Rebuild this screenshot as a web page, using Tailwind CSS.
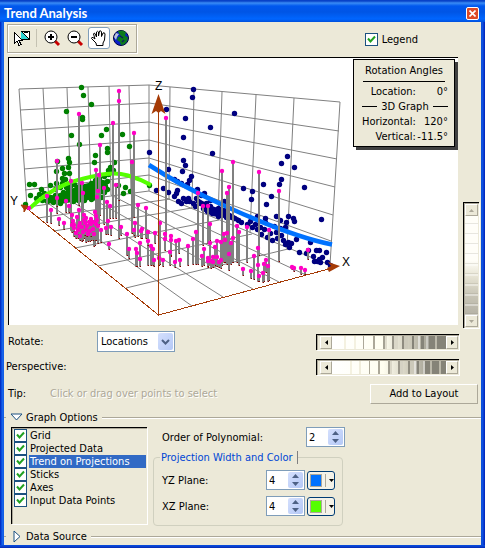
<!DOCTYPE html>
<html lang="en">
<head>
  <meta charset="UTF-8" />
  <meta name="viewport" content="width=device-width, initial-scale=1" />
  <title>Trend Analysis</title>
  <script src="https://cdn.jsdelivr.net/npm/@tailwindcss/browser@4"></script>
</head>
<body class="bg-[#ece9d8] text-black text-[11px] leading-[13px] font-['DejaVu_Sans_Condensed','DejaVu_Sans',sans-serif]">
  <div class="min-h-screen flex flex-col">
    <header class="h-[22px] pl-1 pr-1.5 flex items-center justify-between bg-[linear-gradient(to_bottom,#0842c8_0,#0842c8_1px,#3a8cf5_3px,#0058ee_6px,#0055e5_12px,#0066ff_19px,#004fdc_22px)]">
      <h1 class="mt-[3px] text-white text-[13px] leading-4 font-bold font-['Lato',sans-serif]">Trend Analysis</h1>
      <button type="button" aria-label="Close" class="mt-1 w-[13px] h-[13px] rounded-[2px] border border-white bg-[#dd4a26] grid place-items-center">
        <svg class="w-[7px] h-[7px]" viewBox="0 0 7 7" stroke="#fff" stroke-width="1.6"><path d="M.5.5l6 6M6.5.5l-6 6" /></svg>
      </button>
    </header>

    <div class="flex-1 flex">
      <div class="w-1 shrink-0 bg-[linear-gradient(to_right,#0020b8,#0a50e0_40%,#1e6cf0_75%,#0850d8)]"></div>

      <main class="flex-1 min-w-0 flex flex-col">
        <!-- toolbar -->
        <div class="h-[35px] pt-[2px] pl-[3px] flex items-start justify-between">
          <div class="w-[130px] h-[29px] border border-[#aca899] shadow-[inset_1px_1px_0_#fff,1px_1px_0_#fff] flex items-center pl-[3px] pb-[2px] bg-[#ece9d8]">
            <button type="button" aria-label="Select" class="w-[22px] h-[22px] grid place-items-center">
              <svg class="w-[18px] h-[18px]" viewBox="0 0 18 18" shape-rendering="crispEdges">
                <path d="M8 2h8v8H8z" fill="#fff" stroke="#000" />
                <path d="M8 3l7 7H8z" fill="#2fd5d5" />
                <path d="M8 2l8 8M11 4l4-1" stroke="#000" fill="none" />
                <path d="M1.500 3.500v11l2.500-2.500 2 4.500 2-1-2-4h3.500z" fill="#fff" stroke="#000" />
              </svg>
            </button>
            <span class="ml-[3px] mr-1 w-px h-[18px] bg-[#c5c2b2]"></span>
            <button type="button" aria-label="Zoom in" class="w-[22px] h-[22px] grid place-items-center">
              <svg class="w-[18px] h-[18px]" viewBox="0 0 18 18">
                <path d="M12 12l4 4" stroke="#c80000" stroke-width="3" />
                <circle cx="8" cy="8" r="6" fill="#fff" stroke="#000" />
                <path d="M5 8h6M8 5v6" stroke="#000" stroke-width="2" />
              </svg>
            </button>
            <button type="button" aria-label="Zoom out" class="ml-px w-[22px] h-[22px] grid place-items-center">
              <svg class="w-[18px] h-[18px]" viewBox="0 0 18 18">
                <path d="M12 12l4 4" stroke="#c80000" stroke-width="3" />
                <circle cx="8" cy="8" r="6" fill="#fff" stroke="#000" />
                <path d="M5 8h6" stroke="#000" stroke-width="2" />
              </svg>
            </button>
            <button type="button" aria-label="Pan" aria-pressed="true" class="ml-[2px] w-[22px] h-[22px] rounded-[3px] border border-[#7f9db9] bg-white grid place-items-center">
              <svg class="w-[18px] h-[18px]" viewBox="0 0 18 18">
                <path d="M6.500 16.500L6 14 1.500 9.500Q1.500 8 3 8.500L5 10 3.500 5Q4 3.500 5 4.500L6.500 8V3Q7.500 1.500 8.500 3V7L9.500 2Q11 1.200 11.500 3V7.500L13 4Q14.500 3 15 5L14.500 11 13 14V16.500z" fill="#fff" stroke="#000" />
              </svg>
            </button>
            <button type="button" aria-label="Full extent" class="w-[22px] h-[22px] grid place-items-center">
              <svg class="w-[18px] h-[18px]" viewBox="0 0 18 18">
                <circle cx="9" cy="9" r="7.500" fill="#0a1ec8" stroke="#000040" />
                <path d="M6 2l5-.5 3 2-1 3 3 2-1 4-3 3-3 .5-1-3-3-2 1-3 3-1-2-2z" fill="#0c7a1c" />
                <path d="M2 8l2-4 3 1-2 3-1 3z" fill="#b9c4d6" />
                <path d="M8 7l3 2M10 13l2-2" stroke="#0a1e60" stroke-width="1.500" />
              </svg>
            </button>
          </div>
          <label class="mt-[9px] mr-[63px] flex items-center gap-1">
            <span class="relative w-[13px] h-[13px]">
              <input type="checkbox" checked class="peer block appearance-none w-[13px] h-[13px] bg-white border border-[#1c5180]" />
              <svg class="hidden peer-checked:block pointer-events-none absolute inset-0" viewBox="0 0 13 13" fill="none" stroke="#21a121" stroke-width="2"><path d="M3 5.500l2.500 3L10 3.500" /></svg>
            </span>
            Legend
          </label>
        </div>

        <!-- graph and vertical wheel -->
        <div class="flex items-start pl-1">
          <div class="relative flex-1 min-w-0 bg-white border-t border-l border-black">
            <svg id="graph" class="block w-full" viewBox="9 58 449 267" role="img" aria-label="3D trend graph">
              <g id="grid" stroke="#808080" fill="none"></g>
              <g id="frontAxes" stroke="#a53b06" fill="none" shape-rendering="crispEdges">
                <path d="M25 207L158.500 315L336 267" />
              </g>
              <path d="M40 202L50 196 66 191 80 185 97 181 108 182 107 190 98 197 80 201 60 204z" fill="#008000" />
              <path d="M201 200L212 206 227 211 241 219 238 222 224 218 212 216 201 210z" fill="#000080" />
              <g id="projected"></g>
              <g id="trend" fill="none" stroke-width="4">
                <path d="M149 165C180 185 205 197 225 206S290 236 332 244.500" stroke="#0072ff" stroke-width="4.500" />
                <path d="M30 208C45 194 62 184 80 179.500S112 171 128 175.500Q140 179 151 185" stroke="#55ff00" />
              </g>
              <g id="sticks"></g>
              <path d="M158.500 315V100" stroke="#a53b06" shape-rendering="crispEdges" />
              <path d="M158.500 94L165.500 114 161 111 158.500 113 156 111 151.500 114z" fill="#a53b06" />
              <path d="M340 266L328 262 331 266 327 268 329 272z" fill="#a53b06" />
              <path d="M21 205L28 206 26 209 24 212 24 209z" fill="#a53b06" stroke="#a53b06" />
              <g font-size="12" font-family="Liberation Sans, Arial, sans-serif">
                <text x="155" y="90">Z</text>
                <text x="342" y="266">X</text>
                <text x="10" y="205">Y</text>
              </g>
            </svg>
            <div class="absolute top-px right-[3px] w-[102px] h-[88px] pt-1 px-[9px] bg-[#ece9d8] border border-black shadow-[3px_3px_0_#404040]">
              <div class="text-center leading-[14px] pb-[3px] border-b border-black whitespace-nowrap">Rotation Angles</div>
              <dl class="mt-[2px] grid grid-cols-[1fr_32px] leading-[15px] -mx-px text-right whitespace-nowrap">
                <dt>Location:</dt><dd>0°</dd>
                <dt class="col-span-2 flex items-center gap-1 before:h-px before:flex-1 before:bg-black after:h-px after:flex-1 after:bg-black">3D Graph</dt>
                <dt>Horizontal:</dt><dd>120°</dd>
                <dt>Vertical:</dt><dd>-11.5°</dd>
              </dl>
            </div>
          </div>
          <div class="mt-[145px] ml-[5px] mr-[2px] w-4 h-[126px] shrink-0 flex flex-col border-t border-l border-black shadow-[inset_1px_1px_0_#aca899,1px_1px_0_#fff] p-px">
            <button type="button" aria-label="Up" class="h-3 border border-white border-r-[#aca899] border-b-[#aca899] bg-[#ece9d8] grid place-items-center"><svg class="w-[5px] h-[3px]" viewBox="0 0 5 3" fill="#aca899"><path d="M0 3L2.500 0 5 3z" /></svg></button>
            <input type="range" aria-label="Vertical rotation" class="flex-1 min-h-0 w-full appearance-none [writing-mode:vertical-lr] [&::-webkit-slider-thumb]:opacity-0 bg-[repeating-linear-gradient(to_bottom,transparent_0_7px,#8a887a33_7px_8px,#ffffff66_8px_10px),linear-gradient(to_bottom,#fffef8_0_45%,#e8e5d5_60%,#c8c5b6_80%,#b5b2a6)]" />
            <button type="button" aria-label="Down" class="h-3 border border-white border-r-[#aca899] border-b-[#aca899] bg-[#ece9d8] grid place-items-center"><svg class="w-[5px] h-[3px]" viewBox="0 0 5 3" fill="#aca899"><path d="M0 0h5L2.500 3z" /></svg></button>
          </div>
        </div>

        <!-- rotation controls -->
        <div class="h-[27px] pl-1 flex items-center">
          <label for="rotate" class="w-[89px]">Rotate:</label>
          <span class="relative">
            <select id="rotate" class="block appearance-none w-[78px] h-[21px] pl-[3px] bg-white border border-[#7f9db9] text-[11px]">
              <option>Locations</option>
              <option>3D Graph</option>
            </select>
            <span class="pointer-events-none absolute right-[2px] top-[2px] w-[15px] h-[17px] rounded-[2px] bg-linear-to-br from-[#d5e0fd] to-[#b4c8f6] grid place-items-center">
              <svg class="w-[9px] h-[6px]" viewBox="0 0 9 6" fill="none" stroke="#4d6185" stroke-width="2"><path d="M1 1l3.500 3.500L8 1" /></svg>
            </span>
          </span>
          <div class="ml-auto mr-[22px] w-[143px] h-4 flex border-t border-l border-black shadow-[inset_1px_1px_0_#aca899,1px_1px_0_#fff] p-px pl-[3px]">
            <button type="button" aria-label="Rotate left" class="w-3 border border-white border-r-[#aca899] border-b-[#aca899] grid place-items-center"><svg class="w-[3px] h-[5px]" viewBox="0 0 3 5"><path d="M3 0v5L0 2.500z" /></svg></button>
            <input type="range" aria-label="Rotate" class="flex-1 min-w-0 h-full appearance-none [&::-webkit-slider-thumb]:opacity-0 bg-[linear-gradient(to_right,transparent_12px,#f4f1e0_12px_14px,transparent_14px_22px,#f4f1e0_22px_24px,transparent_24px_31px,#aca899_31px_32px,transparent_32px_41px,#aca899_41px_43px,transparent_43px_51px,#a5a294_51px_53px,#e0ddce_53px_55px,transparent_55px_60px,#99968a_60px_62px,#dad7c8_62px_66px,transparent_66px_70px,#8f8c80_70px_72px,#ccc9ba_72px_76px,transparent_76px_80px,#858378_80px_82px,transparent_82px_86px,#fff8_86px_88px,transparent_88px_89px,#858378_89px_92px,transparent_92px_94px,#fff6_94px_96px,#858378_97px_103px,#bbb8aa_103px_105px,#858378_105px),linear-gradient(to_right,#fff,#fffef0_45%,#d5d2c2_65%,#98968a_90%)]" />
            <button type="button" aria-label="Rotate right" class="w-3 border border-white border-r-[#aca899] border-b-[#aca899] grid place-items-center"><svg class="w-[3px] h-[5px]" viewBox="0 0 3 5"><path d="M0 0v5l3-2.500z" /></svg></button>
          </div>
        </div>
        <div class="h-6 pl-[2px] pb-px flex items-center">
          <label for="perspective">Perspective:</label>
          <div class="ml-auto mr-[22px] w-[143px] h-4 flex border-t border-l border-black shadow-[inset_1px_1px_0_#aca899,1px_1px_0_#fff] p-px pl-[3px]">
            <button type="button" aria-label="Less" class="w-3 border border-white border-r-[#aca899] border-b-[#aca899] grid place-items-center"><svg class="w-[3px] h-[5px]" viewBox="0 0 3 5"><path d="M3 0v5L0 2.500z" /></svg></button>
            <input id="perspective" type="range" class="flex-1 min-w-0 h-full appearance-none [&::-webkit-slider-thumb]:opacity-0 bg-[linear-gradient(to_right,transparent_18px,#f4f1e0_18px_20px,transparent_20px_27px,#f0eddc_27px_29px,transparent_29px_37px,#aca899_37px_38px,transparent_38px_46px,#aca899_46px_48px,transparent_48px_56px,#a09d90_56px_58px,#dad7c8_58px_60px,transparent_60px_66px,#99968a_66px_68px,#d5d2c4_68px_71px,transparent_71px_76px,#8f8c80_76px_78px,#ccc9ba_78px_82px,#fff8_82px_84px,#858378_85px_87px,transparent_87px_91px,#fff6_91px_93px,#858378_93px_98px,#bbb8aa_98px_100px,#858378_100px_107px,#bbb8aa_107px_109px,#858378_109px),linear-gradient(to_right,#fff,#fffef0_45%,#d5d2c2_65%,#98968a_90%)]" />
            <button type="button" aria-label="More" class="w-3 border border-white border-r-[#aca899] border-b-[#aca899] grid place-items-center"><svg class="w-[3px] h-[5px]" viewBox="0 0 3 5"><path d="M0 0v5l3-2.500z" /></svg></button>
          </div>
        </div>
        <div class="h-[29px] pl-1 flex items-center">
          <span class="w-[42px]">Tip:</span>
          <span class="text-[#aca899] [text-shadow:1px_1px_0_#fff]">Click or drag over points to select</span>
          <button type="button" class="ml-auto mr-[3px] w-[108px] h-5 border border-white border-r-[#aca899] border-b-[#aca899]">Add to Layout</button>
        </div>

        <!-- graph options -->
        <h2 class="h-[18px] flex items-center gap-1 before:w-[2px] before:h-px before:bg-[#aca899] after:h-px after:flex-1 after:bg-[#aca899] after:shadow-[0_1px_0_#fff]">
          <button type="button" aria-expanded="true" class="flex items-center gap-[3px]">
            <svg class="w-[13px] h-2" viewBox="0 0 13 8" fill="#fff" stroke="#1c5180"><path d="M1 1h11L6.500 7z" /></svg>
            Graph Options
          </button>
        </h2>
        <div class="flex items-start pl-[7px] pt-px">
          <ul id="layers" class="w-[136px] h-[97px] pt-px pl-[2px] pr-px border-t border-l border-black shadow-[inset_1px_1px_0_#aca899,1px_1px_0_#fff]"></ul>
          <div class="ml-[6px] w-[190px]">
            <div class="h-5 pl-[9px] flex items-center">
              <label for="order">Order of Polynomial:</label>
              <span class="ml-auto mr-[-2px] w-[39px] h-5 flex border border-[#7f9db9] bg-white">
                <input id="order" value="2" class="w-5 min-w-0 pl-[2px] outline-none" />
                <span class="m-px flex-1 flex flex-col rounded-[2px] bg-linear-to-br from-[#d5e0fd] to-[#b4c8f6]">
                  <button type="button" aria-label="Increase" class="flex-1 grid place-items-center"><svg class="w-[7px] h-1" viewBox="0 0 7 4" fill="#4d6185"><path d="M0 4L3.500 0 7 4z" /></svg></button>
                  <button type="button" aria-label="Decrease" class="flex-1 grid place-items-center"><svg class="w-[7px] h-1" viewBox="0 0 7 4" fill="#4d6185"><path d="M0 0h7L3.500 4z" /></svg></button>
                </span>
              </span>
            </div>
            <fieldset class="mt-1 h-[75px] px-[6px] border border-[#d0d0bf] rounded-[4px]">
              <legend class="pl-px pr-1 text-[#0046d5] border-r border-[#808080]">Projection Width and Color</legend>
              <div class="mt-[6px] flex flex-col gap-[6px]">
                <div class="h-5 pl-[2px] flex items-center">
                  <label for="yz">YZ Plane:</label>
                  <span class="ml-auto w-[39px] h-5 flex border border-[#7f9db9] bg-white">
                    <input id="yz" value="4" class="w-5 min-w-0 pl-[2px] outline-none" />
                    <span class="m-px flex-1 flex flex-col rounded-[2px] bg-linear-to-br from-[#d5e0fd] to-[#b4c8f6]">
                      <button type="button" aria-label="Increase" class="flex-1 grid place-items-center"><svg class="w-[7px] h-1" viewBox="0 0 7 4" fill="#4d6185"><path d="M0 4L3.500 0 7 4z" /></svg></button>
                      <button type="button" aria-label="Decrease" class="flex-1 grid place-items-center"><svg class="w-[7px] h-1" viewBox="0 0 7 4" fill="#4d6185"><path d="M0 0h7L3.500 4z" /></svg></button>
                    </span>
                  </span>
                  <button type="button" aria-label="YZ color" class="ml-[2px] mr-px w-7 h-[19px] pl-[2px] flex items-center gap-[3px] rounded-[3px] border border-[#003c74] bg-[#f4f2e8]">
                    <span class="w-3 h-[13px] border border-[#aca899] bg-[#0072ff]"></span>
                    <span class="w-px h-[13px] bg-[#aca899]"></span>
                    <svg class="w-[5px] h-[3px]" viewBox="0 0 5 3"><path d="M0 0h5L2.500 3z" /></svg>
                  </button>
                </div>
                <div class="h-5 pl-[2px] flex items-center">
                  <label for="xz">XZ Plane:</label>
                  <span class="ml-auto w-[39px] h-5 flex border border-[#7f9db9] bg-white">
                    <input id="xz" value="4" class="w-5 min-w-0 pl-[2px] outline-none" />
                    <span class="m-px flex-1 flex flex-col rounded-[2px] bg-linear-to-br from-[#d5e0fd] to-[#b4c8f6]">
                      <button type="button" aria-label="Increase" class="flex-1 grid place-items-center"><svg class="w-[7px] h-1" viewBox="0 0 7 4" fill="#4d6185"><path d="M0 4L3.500 0 7 4z" /></svg></button>
                      <button type="button" aria-label="Decrease" class="flex-1 grid place-items-center"><svg class="w-[7px] h-1" viewBox="0 0 7 4" fill="#4d6185"><path d="M0 0h7L3.500 4z" /></svg></button>
                    </span>
                  </span>
                  <button type="button" aria-label="XZ color" class="ml-[2px] mr-px w-7 h-[19px] pl-[2px] flex items-center gap-[3px] rounded-[3px] border border-[#003c74] bg-[#f4f2e8]">
                    <span class="w-3 h-[13px] border border-[#aca899] bg-[#55ff00]"></span>
                    <span class="w-px h-[13px] bg-[#aca899]"></span>
                    <svg class="w-[5px] h-[3px]" viewBox="0 0 5 3"><path d="M0 0h5L2.500 3z" /></svg>
                  </button>
                </div>
              </div>
            </fieldset>
          </div>
        </div>

        <h2 class="h-[19px] pt-[2px] flex items-center gap-1 before:w-[2px] before:h-px before:bg-[#aca899] after:h-px after:flex-1 after:bg-[#aca899] after:shadow-[0_1px_0_#fff]">
          <button type="button" aria-expanded="false" class="flex items-center">
            <svg class="ml-[3px] mr-[5px] w-2 h-[13px]" viewBox="0 0 8 13" fill="#fff" stroke="#1c5180"><path d="M1 1v11l6-5.500z" /></svg>
            Data Source
          </button>
        </h2>
      </main>

      <div class="w-1 shrink-0 bg-[linear-gradient(to_right,#0850d8,#1050e0_40%,#0020b8)]"></div>
    </div>
    <div class="h-1 bg-[linear-gradient(to_bottom,#0850e0,#0838c8_50%,#001890)]"></div>
  </div>

  <script>
    // checklist of graph layers
    const layers = ["Grid", "Projected Data", "Trend on Projections", "Sticks", "Axes", "Input Data Points"];
    const selected = 2;

    document.getElementById('layers').innerHTML = layers.map((name, i) => `
      <li><label class="flex items-center gap-[2px] h-[13px]">
        <span class="relative w-[13px] h-[13px] shrink-0">
          <input type="checkbox" checked class="peer block appearance-none w-[13px] h-[13px] bg-white border border-[#1c5180]" />
          <svg class="hidden peer-checked:block pointer-events-none absolute inset-0" viewBox="0 0 13 13" fill="none" stroke="#21a121" stroke-width="2"><path d="M3 5.500l2.500 3L10 3.500" /></svg>
        </span>
        <span class="${i === selected ? 'flex-1 pl-px whitespace-nowrap bg-[#316ac5] text-white' : 'flex-1 pl-px whitespace-nowrap'}">${name}</span>
      </label></li>`).join('');

    // wall and floor lines: x1, y1, x2, y2
    const grid = [
      [19,89,149,85],[20,110,149,103],[22,130,149,122],[23,150,149,140],[24,169,149,158],[25,190,149,175],[27,207,149,191],
      [149,85,340,102],[149,103,339,131],[149,122,337,159],[149,140,335,187],[149,158,333,215],[149,175,331,241],[149,191,330,265],
      [19,89,27,207],[43,88,49,204],[67,88,71,201],[88,87,91,198],[109,86,111,195],[129,86,131,193],[149,85,149,191],
      [170,87,169,199],[194,89,192,208],[222,92,218,220],[256,95,250,233],[294,98,287,249],[340,102,330,265],
      [38,218,170,199],[54,231,192,208],[75,248,219,220],[98,266,252,234],[126,288,288,249],
      [192,306,49,204],[223,297,71,201],[253,289,91,198],[279,282,111,195],[306,275,131,193]
    ];

    const green = [
      [81,87],[83,95],[91,104],[66,111],[82,117],[82,119],[71,135],[79,144],[101,135],[106,129],[122,134],[107,148],[107,152],[95,155],[94,162],[129,146],[114,162],
      [68,158],[69,162],[57,161],[56,171],[62,168],[68,167],[64,173],[69,173],[62,178],[65,179],[62,183],[29,184],[34,184],[41,189],[30,195],[25,204],[50,185],[56,183],[55,189],[60,187],[66,187],
      [36,198],[39,194],[44,193],[42,200],[47,201],[50,197],[53,202],[55,195],[57,200],[60,203],[61,196],[63,192],[65,199],[66,195],[68,190],[70,198],[71,194],[73,201],[74,191],[76,196],[77,187],[78,200],[79,192],[81,196],[82,188],[84,200],[85,193],[87,197],[87,186],[89,191],[91,199],[91,183],[93,194],[94,188],[96,198],[97,184],[98,192],[100,188],[101,197],[102,182],[104,192],[105,186],[107,189],[107,181],[74,184],[80,184],[70,186],
      [110,167],[108,170],[113,170],[104,176],[108,174],[118,185],[125,187],[123,193],[130,191],[149,185],[95,180],[99,178]
    ];

    const navy = [
      [193,89],[192,97],[166,109],[185,118],[183,137],[210,127],[234,113],[212,153],[149,152],[183,160],[185,165],[182,171],[287,156],[281,163],[294,167],[281,179],[263,184],[279,184],
      [168,169],[191,176],[189,180],[187,184],[174,179],[177,181],[181,183],[156,190],[163,188],[168,192],[177,190],[174,196],[178,201],[183,198],[176,193],[181,203],[188,198],[189,201],[197,189],[196,198],[193,203],[186,201],[201,195],[204,193],[210,200],
      [243,188],[252,191],[251,199],[271,196],[266,204],[304,187],[321,219],[224,201],[276,216],[288,216],[293,218],[294,221],[257,216],[265,218],
      [200,203],[203,208],[206,203],[207,211],[210,206],[212,213],[215,210],[218,216],[218,208],[222,213],[226,217],[229,216],[234,218],[238,220],[241,222],[224,210],[198,201],[195,206],
      [247,224],[250,221],[252,227],[255,224],[257,229],[260,227],[261,234],[264,229],[265,222],[267,237],[270,233],[272,240],[274,226],[277,238],[280,228],[281,235],[283,240],[285,227],[285,244],[288,242],[289,247],[291,243],[296,239],[280,220],[286,222],[276,232],
      [310,242],[326,252],[316,250],[319,250],[308,250],[299,252],[306,253],[313,256],[322,257],[314,261],[317,261],[320,262],[319,259],[327,262],[330,265]
    ];

    // x, top y, bottom y
    const sticks = [
      [119,91,238],[119,101,200],[79,114,205],[113,123,218],[100,145,215],[57,161,213],[134,133,217],[132,162,233],[71,181,230],[82,183,228],[96,170,232],[99,175,224],[47,196,222],[29,208,209],[51,210,223],[59,219,225],[69,206,212],[66,201,212],[57,198,206],[83,193,220],[97,197,222],[98,191,235],[104,188,224],[107,202,232],[110,206,218],[72,215,222],[116,185,218],
      [64,223,229],[72,225,232],[74,228,236],[77,217,232],[79,210,224],[80,223,238],[82,227,241],[84,220,230],[86,218,236],[86,230,242],[89,222,238],[91,224,240],[93,222,237],[95,212,245],[96,216,240],[97,220,236],[94,234,246],[98,226,243],[101,230,242],[106,228,234],[108,221,234],[111,227,235],[109,244,249],[76,233,238],[80,236,240],[84,215,238],[88,234,241],[73,221,228],
      [74,225,231],[78,230,238],[83,232,240],[87,226,236],[90,231,241],[93,229,240],[96,224,240],[79,226,234],[85,223,235],[91,219,236],
      [138,205,236],[146,208,238],[135,223,237],[134,230,235],[141,231,238],[142,229,238],[121,227,235],[127,234,255],[129,249,258],[136,249,266],[137,253,266],[140,243,265],[148,241,265],[151,246,265],[140,259,266],[154,260,266],[153,249,265],[155,233,243],[148,232,245],[160,223,264],[159,258,265],[163,260,266],[165,234,248],[171,236,256],[176,241,262],[179,240,253],[171,240,255],[170,252,265],[175,262,267],[180,260,266],[165,239,250],
      [166,118,238],[188,246,265],[193,239,264],[196,232,264],[198,193,264],[204,249,265],[202,256,266],[208,261,267],[203,206,245],[208,206,243],[210,224,240],[222,171,265],[233,162,262],[259,172,255],[229,187,262],[227,193,262],[279,191,261],[269,230,280],[258,248,280],[247,227,262],[237,226,262],[239,232,265],[217,241,264],[221,242,266],[224,234,262],[227,233,264],[225,240,262],[231,243,264],[233,238,262],[210,243,265],[215,247,265],[213,257,266],[208,258,266],[211,261,268],[213,262,267],[217,257,266],[219,262,267],[221,260,268],[229,254,270],
      [308,250,259],[292,267,269],[294,268,271],[301,268,274],[305,270,274],[243,269,275],[251,271,278],[254,256,279],[264,264,281],[266,260,272],[268,266,281],[259,276,281],[258,265,281],[263,273,282]
    ];

    const dots = (pts, color) => pts.map(([x, y]) => `<circle cx="${x}.5" cy="${y}.5" r="2.7" fill="${color}" />`).join('');

    document.getElementById('grid').innerHTML = grid.map(([a, b, c, d]) => `<path d="M${a} ${b}L${c} ${d}" />`).join('');
    document.getElementById('projected').innerHTML = dots(green, '#008000') + dots(navy, '#000080');
    document.getElementById('sticks').innerHTML =
      sticks.map(([x, t, b]) => `<path d="M${x} ${t}V${b}" stroke="#808080" stroke-width="2" /><path d="M${x - 1} ${b}h2v1h-1z" fill="#800000" />`).join('') +
      sticks.map(([x, t]) => `<circle cx="${x}" cy="${t}" r="2.2" fill="#ff00c5" />`).join('');
  </script>
</body>
</html>
